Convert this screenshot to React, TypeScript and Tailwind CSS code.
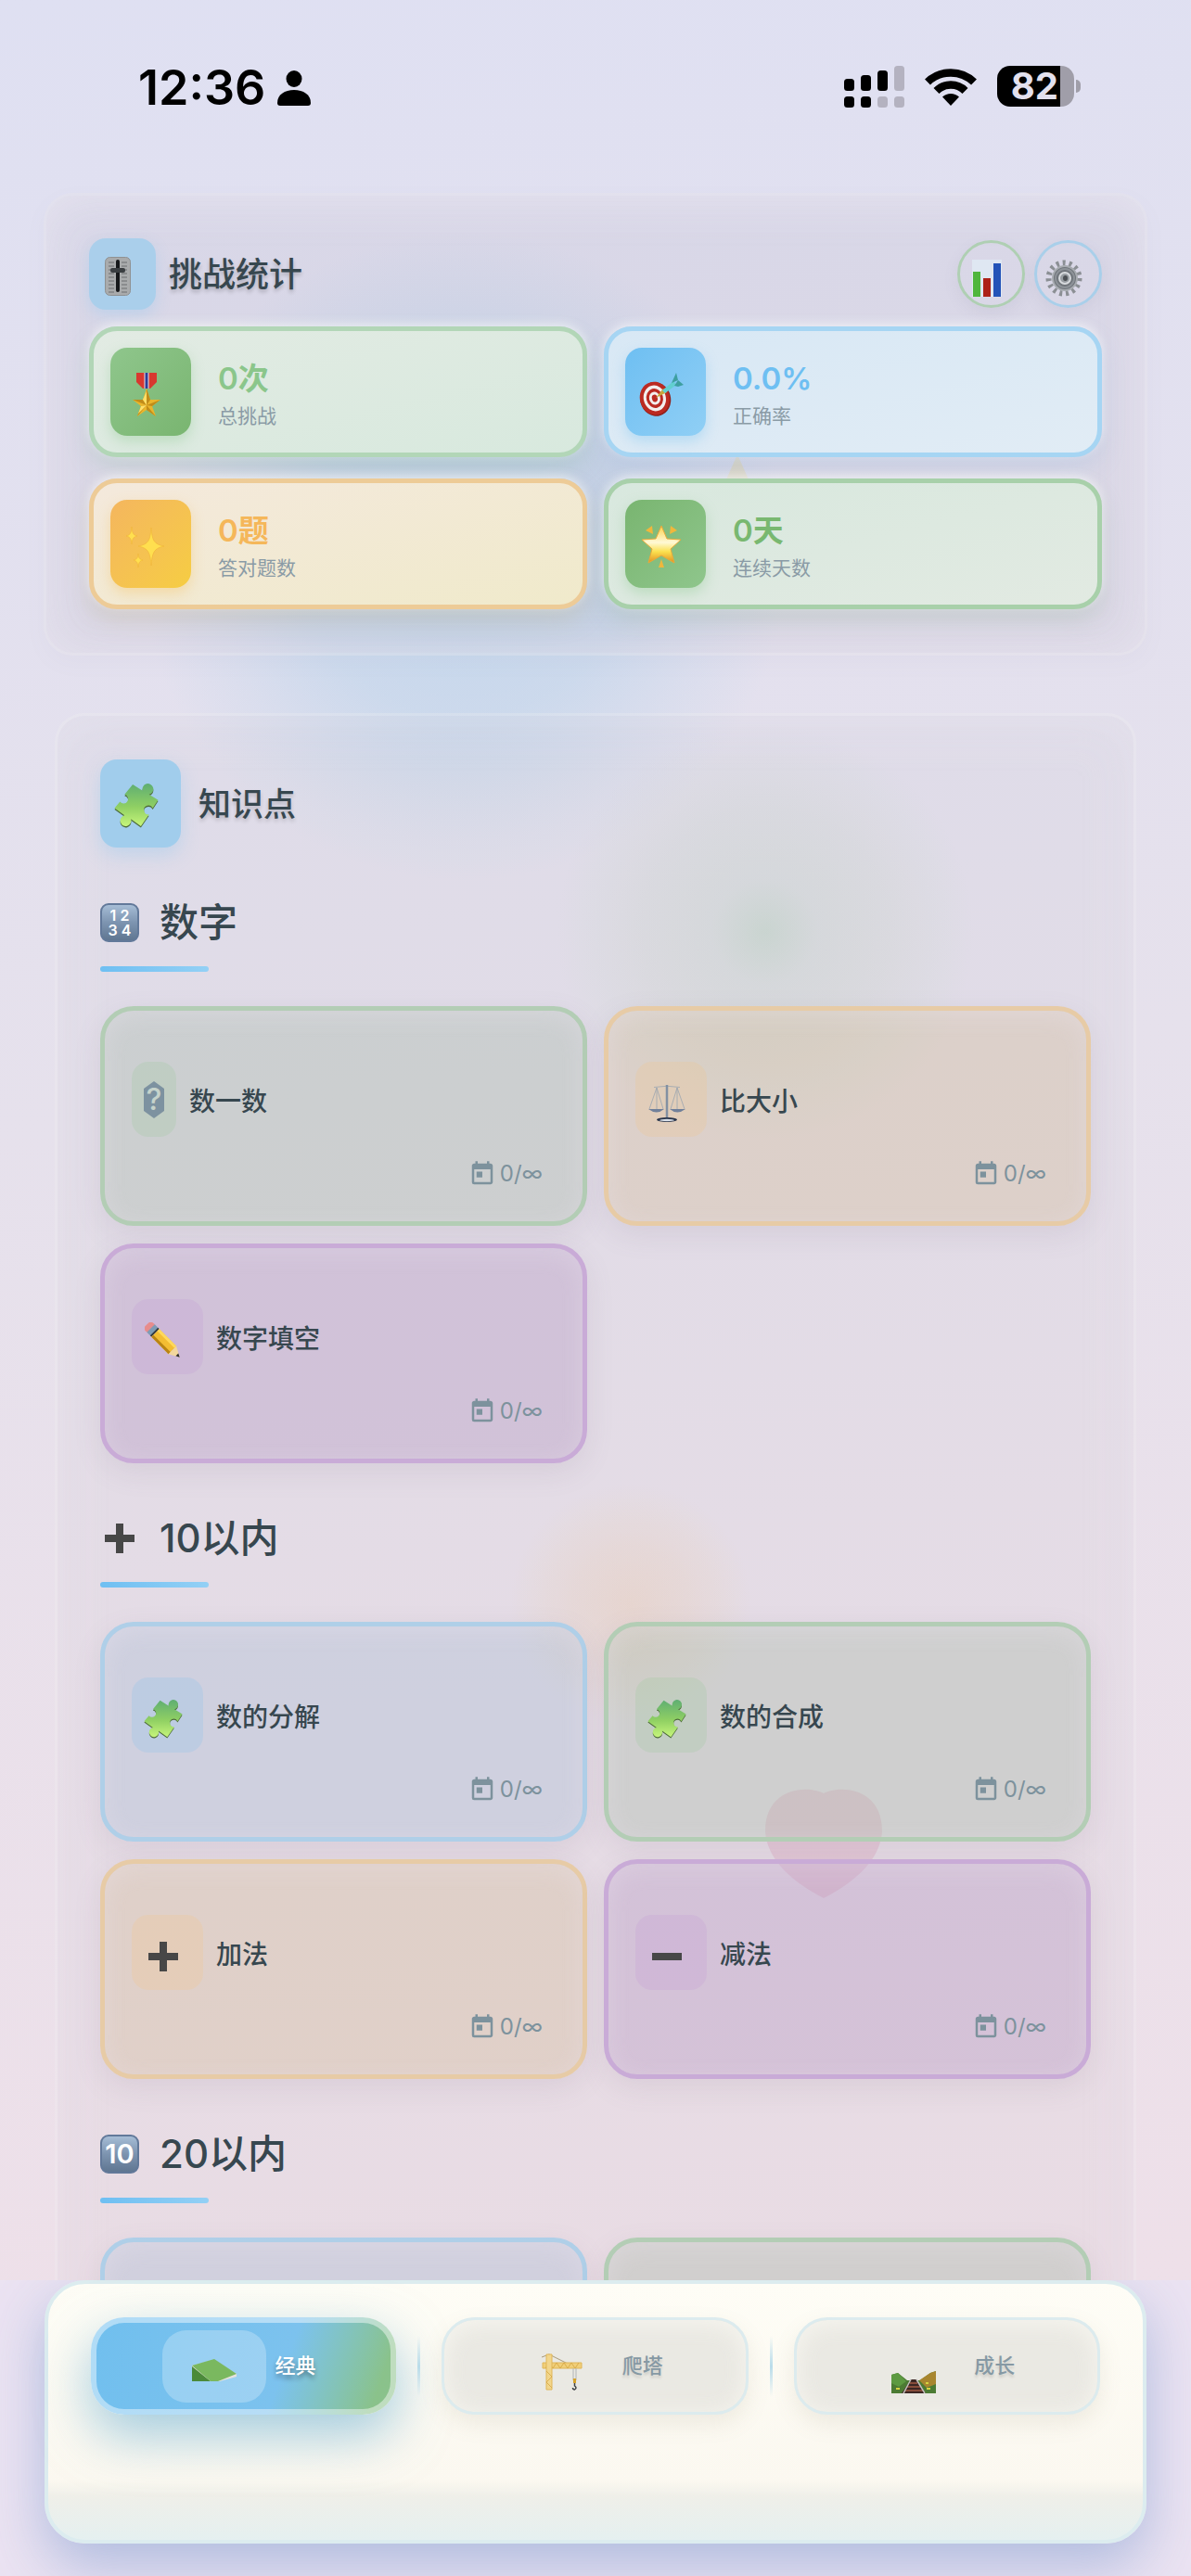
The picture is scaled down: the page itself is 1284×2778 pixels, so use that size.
import type { ReactNode } from 'react';
import clsx from 'clsx';
import { MdToday } from 'react-icons/md';

type Tone = 'green' | 'orange' | 'purple' | 'blue';

interface Stat {
  value: string;
  label: string;
  icon: ReactNode;
  card: string;
  badge: string;
  text: string;
}

interface Topic {
  name?: string;
  icon?: ReactNode;
  narrow?: boolean;
  tone: Tone;
}

interface Section {
  title: string;
  icon: ReactNode;
  topics: Topic[];
}

/* ---------- Icons ---------- */

function PuzzleIcon({ className }: { className?: string }) {
  const piece =
    'M20 1L31 8A6 6 0 1 1 38 12L48 18L42 27A5 5 0 1 0 38 34L29 47L18 39A6 6 0 1 1 11 35L0 27L6 20A5 5 0 1 0 11 12Z';
  return (
    <svg viewBox="0 0 48 49" className={className} aria-hidden="true">
      <defs>
        <linearGradient id="puzzle" x1="0" y1="0" x2="0" y2="1">
          <stop offset="0" stopColor="#5fae72" />
          <stop offset="0.55" stopColor="#90d063" />
          <stop offset="1" stopColor="#c6f57b" />
        </linearGradient>
      </defs>
      <path d={piece} fill="#4d6b3a" transform="translate(0 1.5)" />
      <path d={piece} fill="url(#puzzle)" />
    </svg>
  );
}

function SliderIcon() {
  return (
    <svg viewBox="0 0 28 42" className="h-[42px] w-[28px]" aria-hidden="true">
      <rect x="0.5" y="0.5" width="27" height="41" rx="5" fill="#a9abac" stroke="#8f9192" />
      <g stroke="#6c6f71" strokeWidth="1">
        {[6, 10, 14, 18, 22, 26, 30, 34, 38].map((y) => (
          <path key={y} d={`M4 ${y}h6M18 ${y}h6`} />
        ))}
      </g>
      <rect x="12" y="3" width="4" height="35" rx="2" fill="#16181a" />
      <rect x="6" y="12" width="16" height="5" rx="2" fill="#3a3e41" />
    </svg>
  );
}

function ChartIcon() {
  return (
    <svg viewBox="0 0 32 40" className="h-[40px] w-[32px]" aria-hidden="true">
      <rect width="32" height="40" fill="#dfe7f2" />
      <rect x="1" y="13" width="8" height="27" fill="#4fb63c" />
      <rect x="12" y="20" width="8" height="20" fill="#ad2118" />
      <rect x="23" y="4" width="8" height="36" fill="#2353b8" />
    </svg>
  );
}

function GearIcon() {
  return (
    <svg viewBox="0 0 40 40" className="size-[40px]" aria-hidden="true">
      <circle cx="20" cy="20" r="16.5" fill="none" stroke="#8b8f94" strokeWidth="6" strokeDasharray="3 3.9" />
      <circle cx="21" cy="20" r="13" fill="#70757b" stroke="#a7abb0" strokeWidth="2" />
      <circle cx="21" cy="20" r="10" fill="none" stroke="#8d9298" strokeWidth="2" />
      <circle cx="21" cy="20" r="6" fill="#989da2" stroke="#d7dadd" strokeWidth="2" />
      <ellipse cx="21.5" cy="20" rx="2.5" ry="3" fill="#4b4f53" />
    </svg>
  );
}

function MedalIcon() {
  return (
    <svg viewBox="0 0 48 48" className="size-[48px]" aria-hidden="true">
      <path d="M13 1h22v10l-7 7h-8l-7-7z" fill="#d8382f" />
      <path d="M21.500 1h5v17h-5z" fill="#e6e6f2" />
      <path d="M22.500 1h3v17h-3z" fill="#2d3c97" />
      <path d="M24 18l4 12h11l-9 7 4 11-10-7-10 7 4-11-9-7h11z" fill="#eab52c" />
      <path d="M24 18l4 12-4 6zM39 30l-9 7-6-1zM34 48l-10-7v-5zM14 48l4-11 6-1zM9 30h11l4 6z" fill="#c08c1a" />
      <path d="M24 21v15l-4-6zM24 36l-9 9 3-8z" fill="#ffe06a" />
    </svg>
  );
}

function TargetIcon() {
  return (
    <svg viewBox="0 0 48 48" className="size-[48px]" aria-hidden="true">
      <g transform="rotate(-15 17 29)">
        <ellipse cx="17.500" cy="29.500" rx="16.500" ry="18.500" fill="#8f1f1a" />
        <ellipse cx="17" cy="28.500" rx="16" ry="18" fill="#bb2a22" />
        <ellipse cx="17" cy="28.500" rx="12" ry="14" fill="#f3eeee" />
        <ellipse cx="17" cy="28.500" rx="9" ry="10.500" fill="#bb2a22" />
        <ellipse cx="17" cy="28.500" rx="6" ry="7" fill="#f3eeee" />
        <ellipse cx="17" cy="28.500" rx="3" ry="4" fill="#bb2a22" />
      </g>
      <path d="M18 28l8-10 4 4z" fill="#c8a53a" />
      <path d="M25 20L37 10l3 4-12 9z" fill="#62cfd0" />
      <path d="M35 12L40 1l2 8zM38 15l4-6 6 5-6 2z" fill="#3e9fa0" />
    </svg>
  );
}

function SparklesIcon() {
  return (
    <svg viewBox="0 0 48 48" className="size-[48px]" fill="#ffdf4f" stroke="#f0b43a" strokeWidth="0.6" aria-hidden="true">
      <path d="M29 4c1 14 3 18 14 20-11 2-13 7-14 21-1-14-3-19-14-21C26 22 28 18 29 4z" />
      <path d="M8 3c.6 7 1.500 9 6 10-4.500 1-5.400 3-6 9-.6-6-1.500-8-6-9 4.500-1 5.400-3 6-10z" />
      <path d="M15 32c.5 5 1.200 6 5 7-3.800 1-4.500 3-5 8-.5-5-1.200-7-5-8 3.800-1 4.500-2 5-7z" />
    </svg>
  );
}

function GlowingStarIcon() {
  return (
    <svg viewBox="0 0 48 48" className="size-[48px]" aria-hidden="true">
      <defs>
        <linearGradient id="glow-star" x1="0" y1="0" x2="0" y2="1">
          <stop offset="0" stopColor="#fbd24a" />
          <stop offset="0.45" stopColor="#fff9d6" />
          <stop offset="0.7" stopColor="#fbe04e" />
          <stop offset="1" stopColor="#e08f22" />
        </linearGradient>
      </defs>
      <path
        d="M24 2l6 14 15 1-11 10 4 15-14-8-14 8 4-15L3 17l15-1z"
        fill="url(#glow-star)"
        stroke="#eaa93a"
        strokeLinejoin="round"
      />
      <path d="M14 2l1 9-8-4zM34 2l-1 9 8-4zM24 38l3 9h-6z" fill="#f0b73c" />
    </svg>
  );
}

function ScalesIcon() {
  return (
    <svg viewBox="0 0 40 40" className="size-[40px]" fill="none" aria-hidden="true">
      <path d="M6 2.500q14-2.500 28 0M9 3L1 26M9 3l7 23M31 3l-7 23M31 3l8 23M9 3v23M31 3v23" stroke="#9aa4b0" strokeWidth="0.8" />
      <path d="M20 0v37" stroke="#8290a2" strokeWidth="2.500" />
      <path d="M0 26h17q-8 7-17 0zM23 26h17q-9 7-17 0z" fill="#71809a" />
      <ellipse cx="20" cy="37.500" rx="11" ry="2.500" fill="#28344a" />
      <ellipse cx="20" cy="38" rx="8" ry="1.200" fill="#d9dfe8" />
    </svg>
  );
}

function PencilIcon() {
  return (
    <svg viewBox="0 0 40 40" className="size-[40px]" aria-hidden="true">
      <g transform="rotate(45 20 20)">
        <rect x="-5" y="14" width="9" height="12" rx="4" fill="#e78c8c" />
        <rect x="1" y="14" width="6" height="12" fill="#7e9bb5" />
        <rect x="6" y="14" width="2" height="12" fill="#333a40" />
        <rect x="8" y="14" width="26" height="12" fill="#f3bd33" />
        <rect x="8" y="14" width="26" height="3" fill="#ffd95c" />
        <rect x="8" y="23" width="26" height="3" fill="#b98414" />
        <path d="M34 14l11 6-11 6z" fill="#f3d79c" />
        <path d="M41 18l4 2-4 2z" fill="#2b2b2b" />
      </g>
    </svg>
  );
}

function PlusIcon() {
  return (
    <svg viewBox="0 0 40 40" className="size-[40px]" aria-hidden="true">
      <path d="M16 4h8v12h12v8H24v12h-8V24H4v-8h12z" fill="#474747" />
    </svg>
  );
}

function MinusIcon() {
  return (
    <svg viewBox="0 0 40 40" className="size-[40px]" aria-hidden="true">
      <path d="M4 16h32v8H4z" fill="#474747" />
    </svg>
  );
}

function UnknownIcon() {
  return (
    <span className="relative flex h-[40px] w-[22px] items-center justify-center">
      <svg viewBox="0 0 22 40" className="absolute inset-0 size-full" aria-hidden="true">
        <path d="M11 0l11 8v24l-11 8L0 32V8z" fill="#7d92a0" />
      </svg>
      <span className="relative text-[32px] leading-[40px] font-medium text-[#c6d3cb]">?</span>
    </span>
  );
}

function Keycap({ children, className }: { children: ReactNode; className: string }) {
  return (
    <span
      className={clsx(
        'flex size-[42px] flex-col items-center justify-center rounded-[9px] border-2 border-[#62799a] bg-linear-to-b from-[#a6bdd6] via-[#7d94b0] to-[#5f7691] font-semibold text-white',
        className,
      )}
    >
      {children}
    </span>
  );
}

function BookIcon() {
  return (
    <svg viewBox="0 0 48 24" className="h-[24px] w-[48px]" aria-hidden="true">
      <path d="M0 7l23-6 25 15v3L30 24H0z" fill="#e6e2dc" />
      <path d="M0 8l20 16H0z" fill="#4b8a3a" />
      <path d="M0 7L24 0l24 16-20 8h-8z" fill="#7ab85f" />
    </svg>
  );
}

function CraneIcon() {
  return (
    <svg viewBox="0 0 44 42" className="h-[42px] w-[44px]" fill="none" aria-hidden="true">
      <path d="M0 5L8 2l28 14" stroke="#a99a78" />
      <path d="M1 11h42v6H1z" fill="#f0cf79" stroke="#e0b658" />
      <path d="M4 17l4-6 4 6 4-6 4 6 4-6 4 6 4-6 4 6 4-6" stroke="#d4a440" strokeWidth="0.8" />
      <path d="M5 2h6v38H5z" fill="#f2d68c" stroke="#e0b658" />
      <path d="M5 20l6 6-6 6 6 6" stroke="#d4a440" strokeWidth="0.8" />
      <path d="M34 17v13M37 17v13" stroke="#b0b4b6" />
      <path d="M34 28h3v5h-3z" fill="#d6a328" />
      <path d="M35.500 33v3q3 2 0 4-2 0-2-2" stroke="#3d4246" strokeWidth="1.500" />
    </svg>
  );
}

function TrackIcon() {
  return (
    <svg viewBox="0 0 48 24" className="h-[24px] w-[48px]" aria-hidden="true">
      <path d="M0 4l7-2 10 8h14L42 2l6-2v24H0z" fill="#4c7b33" />
      <path d="M30 10L42 2l6-2v14l-10 4z" fill="#a8862f" />
      <path d="M0 4l7-2 9 9-8 6-8-4z" fill="#5d9a41" />
      <path d="M21 9h6l10 15H11z" fill="#3c2723" />
      <path d="M20 13h8M17 17h14M14 21h20" stroke="#a05a43" strokeWidth="1.500" />
      <path d="M21 9l-8 15M27 9l9 15" stroke="#c5c2bf" strokeWidth="1.500" />
      <path d="M5 19h4M38 19h4M37 13h3" stroke="#d4d33f" strokeWidth="2" />
    </svg>
  );
}

/* ---------- Data ---------- */

const stats: Stat[] = [
  {
    value: '0次',
    label: '总挑战',
    icon: <MedalIcon />,
    card: 'border-[#b2d6b7] from-[#e2ebe3] to-[#d8e9de] shadow-[0_-3px_12px_rgba(255,255,255,0.6),0_12px_24px_rgba(129,180,150,0.25)]',
    badge: 'from-[#8fc68c] to-[#79b570] shadow-[0_6px_14px_rgba(129,199,132,0.35)]',
    text: 'text-[#8bc68b]',
  },
  {
    value: '0.0%',
    label: '正确率',
    icon: <TargetIcon />,
    card: 'border-[#a6d5f3] from-[#d8e8f5] to-[#e1ecf5] shadow-[0_-3px_12px_rgba(255,255,255,0.6),0_12px_24px_rgba(140,180,220,0.25)]',
    badge: 'from-[#6ebff2] to-[#90cff5] shadow-[0_6px_14px_rgba(110,191,242,0.35)]',
    text: 'text-[#6ebff2]',
  },
  {
    value: '0题',
    label: '答对题数',
    icon: <SparklesIcon />,
    card: 'border-[#edcb97] from-[#f4e9dc] to-[#f0eacb] shadow-[0_-3px_12px_rgba(255,255,255,0.6),0_12px_24px_rgba(190,180,150,0.35)]',
    badge: 'from-[#f4b65e] to-[#f6cd42] shadow-[0_6px_14px_rgba(245,190,80,0.35)]',
    text: 'text-[#f5b75a]',
  },
  {
    value: '0天',
    label: '连续天数',
    icon: <GlowingStarIcon />,
    card: 'border-[#a8d0aa] from-[#d8e8de] to-[#e2eae2] shadow-[0_-3px_12px_rgba(255,255,255,0.6),0_12px_24px_rgba(150,180,160,0.3)]',
    badge: 'from-[#79b570] to-[#8fc68c] shadow-[0_6px_14px_rgba(129,199,132,0.35)]',
    text: 'text-[#79b870]',
  },
];

const sections: Section[] = [
  {
    title: '数字',
    icon: (
      <Keycap className="text-[16px] leading-[16px]">
        <span>1 2</span>
        <span>3 4</span>
      </Keycap>
    ),
    topics: [
      { name: '数一数', icon: <UnknownIcon />, narrow: true, tone: 'green' },
      { name: '比大小', icon: <ScalesIcon />, tone: 'orange' },
      { name: '数字填空', icon: <PencilIcon />, tone: 'purple' },
    ],
  },
  {
    title: '10以内',
    icon: <PlusIcon />,
    topics: [
      { name: '数的分解', icon: <PuzzleIcon className="size-[42px]" />, tone: 'blue' },
      { name: '数的合成', icon: <PuzzleIcon className="size-[42px]" />, tone: 'green' },
      { name: '加法', icon: <PlusIcon />, tone: 'orange' },
      { name: '减法', icon: <MinusIcon />, tone: 'purple' },
    ],
  },
  {
    title: '20以内',
    icon: <Keycap className="text-[29px]">10</Keycap>,
    topics: [{ tone: 'blue' }, { tone: 'green' }],
  },
];

const toneCard: Record<Tone, string> = {
  green: 'border-[#b3cdb5] bg-[rgba(154,180,155,0.3)]',
  orange: 'border-[#e7cba6] bg-[rgba(207,183,135,0.3)]',
  purple: 'border-[#c9abd7] bg-[rgba(170,137,185,0.3)]',
  blue: 'border-[#afcfe8] bg-[rgba(154,183,208,0.3)]',
};

const toneBadge: Record<Tone, string> = {
  green: 'bg-[rgba(129,199,132,0.16)]',
  orange: 'bg-[rgba(255,193,107,0.16)]',
  purple: 'bg-[rgba(186,134,213,0.16)]',
  blue: 'bg-[rgba(110,191,242,0.18)]',
};

/* ---------- Pieces ---------- */

function StatusBar() {
  return (
    <div className="flex h-[208px] items-start justify-between pt-[69px] pr-[119px] pl-[149px] text-black">
      <div className="flex h-[52px] items-center gap-[13px]">
        <span className="text-[52px] leading-[52px] font-semibold">12:36</span>
        <svg viewBox="0 0 36 38" className="h-[38px] w-[36px]" aria-hidden="true">
          <ellipse cx="18" cy="9" rx="8.500" ry="9" />
          <path d="M0 35C0 26 8 21 18 21s18 5 18 14q0 3-3 3H3q-3 0-3-3z" />
        </svg>
      </div>
      <div className="flex h-[48px] items-center gap-[22px]">
        <svg viewBox="0 0 65 45" className="h-[45px] w-[65px]" aria-hidden="true">
          <rect x="0" y="14" width="11" height="13" rx="3.500" />
          <rect x="18" y="10" width="11" height="17" rx="3.500" />
          <rect x="36" y="5" width="11" height="22" rx="3.500" />
          <rect x="54" y="0" width="11" height="27" rx="3.500" fill="#b4b2c0" />
          <rect x="0" y="33" width="11" height="12" rx="3.500" />
          <rect x="18" y="33" width="11" height="12" rx="3.500" />
          <rect x="36" y="33" width="11" height="12" rx="3.500" fill="#b4b2c0" />
          <rect x="54" y="33" width="11" height="12" rx="3.500" fill="#b4b2c0" />
        </svg>
        <svg viewBox="0 0 56 41" className="h-[41px] w-[56px]" fill="none" stroke="#000" strokeWidth="8.500" aria-hidden="true">
          <path d="M3 15.500a36 36 0 0 1 50 0" />
          <path d="M12.500 25a22 22 0 0 1 31 0" />
          <path d="M28 41l-9-9.500a13 13 0 0 1 18 0z" fill="#000" stroke="none" />
        </svg>
        <div className="flex items-center gap-[2px]">
          <div className="flex h-[44px] w-[83px] items-center justify-end rounded-[14px] bg-linear-to-r from-black from-82% to-[#a09ea9] to-82% pr-[17px] text-[40px] leading-[44px] font-bold text-[#e2e0ee]">
            82
          </div>
          <div className="h-[14px] w-[5px] rounded-r-full bg-[#a09ea9]" />
        </div>
      </div>
    </div>
  );
}

function StatCard({ stat }: { stat: Stat }) {
  return (
    <div
      className={clsx(
        'flex h-[141px] items-center gap-[29px] rounded-[30px] border-5 bg-linear-to-br px-[18px]',
        stat.card,
      )}
    >
      <div
        className={clsx(
          'flex h-[95px] w-[87px] items-center justify-center rounded-[18px] bg-linear-to-br pt-1 pr-[10px]',
          stat.badge,
        )}
      >
        {stat.icon}
      </div>
      <div className="pt-[8px]">
        <p className={clsx('text-[33px] leading-[44px] font-semibold', stat.text)}>{stat.value}</p>
        <p className="text-[21px] leading-[38px] text-[#8a9ba6]">{stat.label}</p>
      </div>
    </div>
  );
}

function StatsPanel() {
  return (
    <section className="mx-[47px] rounded-[32px] border-3 border-white/25 bg-[rgba(110,100,110,0.07)] px-[46px] pt-[46px] pb-[47px] shadow-[0_8px_24px_rgba(120,120,150,0.04),inset_0_4px_50px_rgba(232,228,240,0.85)]">
      <div className="flex h-[77px] items-center justify-between">
        <div className="flex items-center gap-[14px]">
          <div className="flex h-[77px] w-[72px] items-center justify-center rounded-[18px] bg-[#aacfeb] pt-1 pr-[10px] shadow-[0_6px_16px_rgba(110,191,242,0.25)]">
            <SliderIcon />
          </div>
          <h2 className="text-[36px] leading-[44px] font-medium [text-shadow:0_3px_4px_rgba(0,0,0,0.2)]">挑战统计</h2>
        </div>
        <div className="flex gap-[10px]">
          <button
            type="button"
            aria-label="统计"
            className="flex size-[73px] items-center justify-center rounded-full border-3 border-[#afcfb3] pt-2 pr-[10px] shadow-[0_6px_16px_rgba(120,120,150,0.1)]"
          >
            <ChartIcon />
          </button>
          <button
            type="button"
            aria-label="设置"
            className="flex size-[73px] items-center justify-center rounded-full border-3 border-[#a9cfea] pt-2 pr-[10px] shadow-[0_6px_16px_rgba(120,120,150,0.1)]"
          >
            <GearIcon />
          </button>
        </div>
      </div>
      <div className="mt-[18px] grid grid-cols-2 gap-x-[18px] gap-y-[23px]">
        {stats.map((stat) => (
          <StatCard key={stat.label} stat={stat} />
        ))}
      </div>
    </section>
  );
}

function TopicCard({ topic }: { topic: Topic }) {
  return (
    <button
      type="button"
      className={clsx(
        'flex h-[237px] flex-col rounded-[36px] border-5 px-[29px] pt-[55px] text-left shadow-[0_10px_30px_rgba(120,110,130,0.12),inset_0_6px_26px_rgba(240,235,245,0.28)]',
        toneCard[topic.tone],
      )}
    >
      {topic.name && (
        <>
          <span className="flex items-center gap-[14px]">
            <span
              className={clsx(
                'flex h-[81px] items-center justify-center rounded-[18px]',
                topic.narrow ? 'w-[48px]' : 'w-[77px] pt-2 pr-[10px]',
                toneBadge[topic.tone],
              )}
            >
              {topic.icon}
            </span>
            <span className="pt-[5px] text-[28px] leading-[40px] font-medium">{topic.name}</span>
          </span>
          <span className="mt-[24px] flex items-center gap-[4px] self-end pr-[14px] text-[24px] leading-[32px] text-[#7d929d]">
            <MdToday className="size-[30px]" />
            0/∞
          </span>
        </>
      )}
    </button>
  );
}

function KnowledgePanel() {
  return (
    <section className="mx-[59px] mt-[62px] flex flex-col gap-[51px] rounded-[32px] border-3 border-white/25 bg-[rgba(110,110,110,0.03)] px-[46px] pt-[47px] pb-[60px] shadow-[inset_0_4px_50px_rgba(236,232,240,0.35)]">
      <div className="flex items-center gap-[19px]">
        <div className="flex h-[95px] w-[87px] items-center justify-center rounded-[18px] bg-[#a1cdec] pt-1 pr-[10px] shadow-[0_8px_20px_rgba(110,191,242,0.28)]">
          <PuzzleIcon className="size-[48px]" />
        </div>
        <h2 className="text-[35px] leading-[44px] font-medium [text-shadow:0_3px_4px_rgba(0,0,0,0.18)]">知识点</h2>
      </div>
      {sections.map((section) => (
        <div key={section.title}>
          <h3 className="flex h-[60px] items-center gap-[22px] text-[42px] leading-[60px] font-medium">
            <span className="flex w-[42px] justify-center">{section.icon}</span>
            {section.title}
          </h3>
          <div className="mt-[17px] h-[6px] w-[117px] rounded-full bg-linear-to-r from-[#6ebff2] to-[#93d0f5]" />
          <div className="mt-[37px] grid grid-cols-2 gap-x-[18px] gap-y-[19px]">
            {section.topics.map((topic, index) => (
              <TopicCard key={index} topic={topic} />
            ))}
          </div>
        </div>
      ))}
    </section>
  );
}

/* Soft colour spots, the star and the heart behind the panels */
function Backdrop() {
  return (
    <div className="pointer-events-none absolute inset-0 overflow-hidden" aria-hidden="true">
      <div className="absolute top-[250px] left-[150px] size-[700px] rounded-full bg-[radial-gradient(closest-side,rgba(150,200,232,0.42),rgba(150,200,232,0.3)_50%,rgba(150,200,232,0.12)_78%,transparent)]" />
      <div className="absolute top-[780px] left-[600px] size-[450px] rounded-full bg-[radial-gradient(closest-side,rgba(160,200,165,0.34),rgba(170,200,170,0.2)_25%,rgba(175,200,175,0.14)_60%,transparent)]" />
      <div className="absolute top-[1600px] left-[550px] size-[260px] rounded-full bg-[radial-gradient(closest-side,rgba(240,195,145,0.26),rgba(240,200,155,0.18)_50%,transparent)]" />
      <svg viewBox="0 0 160 150" className="absolute top-[490px] left-[715px] h-[150px] w-[160px]">
        <path d="M80 0l24 54h56l-48 34 18 62-50-38-50 38 18-62L0 54h56z" fill="rgba(240,215,120,0.3)" />
      </svg>
      <svg viewBox="0 0 126 118" className="absolute top-[1929px] left-[825px] h-[118px] w-[126px]">
        <path
          d="M63 5C80-4 126-2 126 46 124 76 98 100 63 118 28 100 2 76 0 46 0-2 46-4 63 5z"
          fill="rgba(214,120,155,0.2)"
        />
      </svg>
    </div>
  );
}

const tabs = [
  { name: '经典', icon: <BookIcon />, active: true },
  { name: '爬塔', icon: <CraneIcon />, active: false },
  { name: '成长', icon: <TrackIcon />, active: false },
];

function TabBar() {
  return (
    <nav className="relative overflow-hidden bg-[#ebe3f2] px-[48px] pb-[35px]">
      <div className="h-[284px] rounded-[44px] border-4 border-[#dcecef] bg-[linear-gradient(to_bottom,#fefdf6,#fbf8f0_77%,#efefe9_83%,#e5f0f0)] px-[46px] pt-[36px] shadow-[0_24px_60px_rgba(160,178,218,0.8)]">
        <div className="flex items-center">
          {tabs.map((tab, index) => (
            <div key={tab.name} className={clsx('flex items-center', index === 0 ? 'flex-none' : 'flex-1')}>
              {index > 0 && (
                <span className="mx-[23px] h-[66px] w-[3px] bg-linear-to-b from-transparent via-[#b9dcea] to-transparent" />
              )}
              <button
                type="button"
                className={clsx(
                  'flex h-[105px] items-center justify-center gap-[9px] rounded-[36px]',
                  tab.active
                    ? 'w-[329px] border-6 border-white/45 bg-linear-110 from-[#70bfee] via-[#7cc2ee] via-62% to-[#8ac28b] to-92% bg-origin-border pr-[9px] text-white shadow-[0_22px_56px_rgba(90,165,205,0.55)]'
                    : 'flex-1 border-3 border-[#dcebee] bg-[#eae9e3] pr-[18px] text-[#8699a4] shadow-[0_10px_24px_rgba(130,120,100,0.12),inset_0_4px_26px_rgba(250,249,243,0.8)]',
                )}
              >
                <span
                  className={clsx(
                    'flex h-[78px] w-[112px] items-center justify-center rounded-[26px]',
                    tab.active ? 'bg-white/25 pt-2' : 'pt-3',
                    index === 2 && 'items-end pb-[10px]',
                  )}
                >
                  {tab.icon}
                </span>
                <span
                  className={clsx(
                    'pb-[2px] text-[22px] leading-[32px] font-medium',
                    tab.active
                      ? '[text-shadow:0_4px_5px_rgba(0,0,0,0.35)]'
                      : '[text-shadow:0_3px_3px_rgba(0,0,0,0.12)]',
                  )}
                >
                  {tab.name}
                </span>
              </button>
            </div>
          ))}
        </div>
      </div>
    </nav>
  );
}

export default function App() {
  return (
    <div className="relative flex h-screen flex-col overflow-hidden bg-linear-175 from-[#dfe0f2] via-[#e6e1ec] via-42% to-[#eee0e9] to-88% font-['Inter','Noto_Sans_CJK_SC',sans-serif] text-[#37474f]">
      <Backdrop />
      <main className="relative min-h-0 flex-1 overflow-y-auto [scrollbar-width:none]">
        <StatusBar />
        <StatsPanel />
        <KnowledgePanel />
      </main>
      <TabBar />
    </div>
  );
}
